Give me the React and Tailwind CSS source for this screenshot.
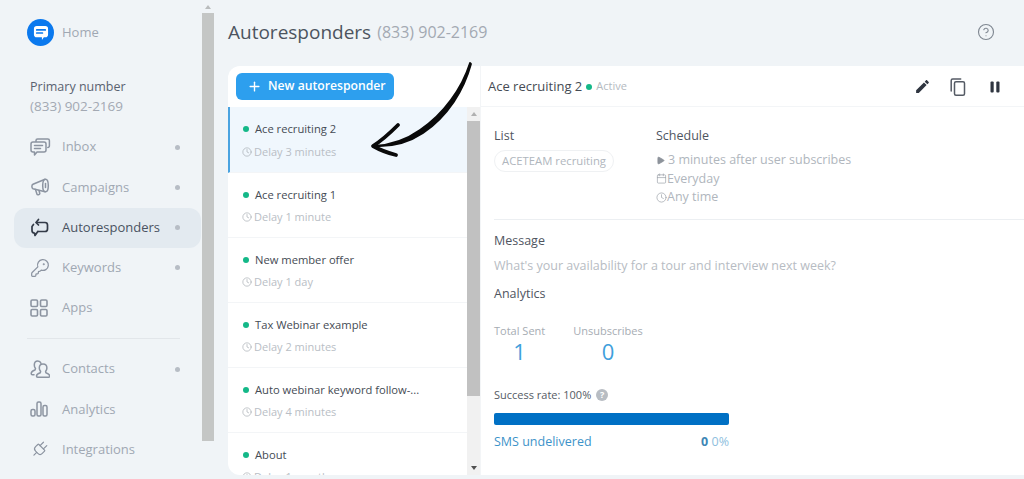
import React from "react";
import { Plus, Clock, Calendar, Play, CircleHelp, KeyRound, Plug } from "lucide-react";

const font = "font-['Open_Sans',sans-serif]";

function InboxIcon() {
  return (
    <svg width="21" height="21" viewBox="0 0 21 21" fill="none" stroke="currentColor" strokeWidth="1.5" strokeLinecap="round" strokeLinejoin="round">
      <path d="M6 4.5V3.6A1.6 1.6 0 0 1 7.6 2h10.2a1.6 1.6 0 0 1 1.6 1.6v5.2a1.6 1.6 0 0 1-1.6 1.6" />
      <path d="M3 5h11a2 2 0 0 1 2 2v6a2 2 0 0 1-2 2H7l-2.5 3v-3H3a2 2 0 0 1-2-2V7a2 2 0 0 1 2-2z" />
      <path d="M4.5 8.5h8M4.5 11.5h6" />
    </svg>
  );
}

function HornIcon() {
  return (
    <svg width="20" height="20" viewBox="0 0 20 20" fill="none" stroke="currentColor" strokeWidth="1.5" strokeLinecap="round" strokeLinejoin="round">
      <ellipse cx="15.500" cy="8.500" rx="2.800" ry="6.300" />
      <path d="M15 2.300 3 7.200c-1.500.7-1.500 3.800 0 4.500L15 14.700" />
      <path d="M5.500 12.500 7 17.200c.3 1 2.800.5 2.800-.7l-.8-3" />
      <path d="M15.500 6.500v4" />
    </svg>
  );
}

function RespondIcon() {
  return (
    <svg width="19" height="19" viewBox="0 0 19 19" fill="none" stroke="currentColor" strokeWidth="1.7" strokeLinecap="round" strokeLinejoin="round">
      <path d="M8.500 1.500 6 4.500l2.500 2.500" />
      <path d="M6.500 4.500H15a2.500 2.500 0 0 1 2.500 2.500v4a2.500 2.500 0 0 1-2.500 2.500H8" />
      <path d="M3.500 6.500 2 8.500v4A2.500 2.500 0 0 0 4.500 15l.5 2.500 2.800-4" />
    </svg>
  );
}

function AppsIcon() {
  return (
    <svg width="18" height="18" viewBox="0 0 18 18" fill="none" stroke="currentColor" strokeWidth="1.6">
      <rect x="1" y="1" width="6.500" height="6.500" rx="1.200" />
      <rect x="10.500" y="1" width="6.500" height="6.500" rx="1.200" />
      <rect x="1" y="10.500" width="6.500" height="6.500" rx="1.200" />
      <rect x="10.500" y="10.500" width="6.500" height="6.500" rx="1.200" />
    </svg>
  );
}

function ContactsIcon() {
  return (
    <svg width="20" height="19" viewBox="0 0 20 19" fill="none" stroke="currentColor" strokeWidth="1.5" strokeLinecap="round" strokeLinejoin="round">
      <path d="M11 3.200C10.500 1.800 9.300 1 7.800 1 5.800 1 4.300 2.500 4.300 5c0 1.500.5 2.700 1.200 3.500L5 10c-2 .7-3.800 1.800-3.800 3.500 0 .8.500 1.300 1.200 1.300H4" />
      <path d="M13 4c-2.200 0-3.700 1.700-3.700 4 0 1.500.5 2.600 1.300 3.400l-.3 1.400c-2 .7-3.800 1.600-3.800 3.300 0 .6.400 1.100 1.100 1.100h11c.7 0 1.100-.5 1.100-1.100 0-1.700-1.800-2.600-3.800-3.300l-.3-1.400c.8-.8 1.300-1.900 1.300-3.400C16.900 5.700 15.200 4 13 4z" />
    </svg>
  );
}

function BarsIcon() {
  return (
    <svg width="18" height="16" viewBox="0 0 18 16" fill="none" stroke="currentColor" strokeWidth="1.5">
      <rect x="1" y="8.500" width="4" height="6.500" rx="1.500" />
      <rect x="7" y="1" width="4" height="14" rx="1.500" />
      <rect x="13" y="4.500" width="4" height="10.500" rx="1.500" />
    </svg>
  );
}

function Logo() {
  return (
    <div className="flex h-[27px] w-[27px] items-center justify-center rounded-full bg-[#0b79ee]">
      <svg width="16" height="16" viewBox="0 0 17 17">
        <path d="M4 1h9a3 3 0 0 1 3 3v6a3 3 0 0 1-3 3h-1.500l-2 3v-3H4a3 3 0 0 1-3-3V4a3 3 0 0 1 3-3z" fill="#fff" />
        <path d="M4 5.200h9M4 8.500h6" stroke="#0b79ee" strokeWidth="1.800" strokeLinecap="round" />
      </svg>
    </div>
  );
}

function NavItem({ icon, label, dot, active }) {
  return (
    <div className={`flex h-[40px] items-center rounded-xl pl-[16px] pr-[21px] ${active ? "bg-[#e3eaf0]" : ""}`}>
      <div className={`flex w-[32px] items-center ${active ? "text-[#333b48]" : "text-[#8c94a1]"}`}>{icon}</div>
      <span className={`flex-1 text-[13px] font-medium ${active ? "text-[#4a5361]" : "text-[#a0a8b3]"}`}>{label}</span>
      {dot && <span className="h-[5px] w-[5px] rounded-full bg-[#b7bdc5]" />}
    </div>
  );
}

function Sidebar() {
  return (
    <aside className="flex h-full w-[202px] shrink-0 flex-col pl-[14px] pr-[1px]">
      <div className="flex items-center gap-[8px] pl-[13px] pt-[19px]">
        <Logo />
        <span className="pt-[1px] text-[13px] font-medium text-[#a0a8b3]">Home</span>
      </div>
      <div className="pl-[16px] pt-[31px]">
        <div className="text-[12.500px] leading-[20px] font-medium text-[#5a6270]">Primary number</div>
        <div className="text-[13.500px] leading-[19px] text-[#a3a9b3]">(833) 902-2169</div>
      </div>
      <nav className="mt-[11px] flex flex-col gap-[0.300px]">
        <NavItem icon={<InboxIcon />} label="Inbox" dot />
        <NavItem icon={<HornIcon />} label="Campaigns" dot />
        <NavItem icon={<RespondIcon />} label="Autoresponders" dot active />
        <NavItem icon={<KeyRound size={20} strokeWidth={1.500} />} label="Keywords" dot />
        <NavItem icon={<AppsIcon />} label="Apps" />
      </nav>
      <div className="ml-[13px] mr-[21px] my-[10px] border-t border-[#e2e6ea]" />
      <nav className="flex flex-col gap-[0.300px]">
        <NavItem icon={<ContactsIcon />} label="Contacts" dot />
        <NavItem icon={<BarsIcon />} label="Analytics" />
        <NavItem icon={<Plug size={19} strokeWidth={1.500} className="rotate-45" />} label="Integrations" />
      </nav>
    </aside>
  );
}

function PageScroll() {
  return (
    <div className="flex h-[441px] w-[12px] shrink-0 flex-col items-center">
      <div className="flex h-[13px] w-full items-center justify-center">
        <div className="h-0 w-0 border-x-[3px] border-b-[4px] border-x-transparent border-b-[#b9bcbd]" />
      </div>
      <div className="w-full flex-1 bg-[#c4c6c5]" />
    </div>
  );
}

function ListItem({ title, delay, active }) {
  return (
    <div className={`shrink-0 border-b border-[#f3f5f7] ${active ? "h-[66px] border-l-[2px] border-l-[#4aa3e0] bg-[#f0f7fd] pl-[13px] pt-[15px]" : "h-[65px] pl-[15px] pt-[15px]"}`}>
      <div className="flex items-center gap-[6px]">
        <span className="h-[6px] w-[6px] rounded-full bg-[#14b888]" />
        <span className="text-[11.200px] leading-[14px] font-medium text-[#454b54]">{title}</span>
      </div>
      <div className={`flex items-center gap-[2px] text-[#b9bec5] ${active ? "mt-[9px]" : "mt-[8px]"}`}>
        <Clock size={10} strokeWidth={1.500} className="-ml-[1px] text-[#a0a6ae]" />
        <span className="text-[11px] leading-[14px]">{delay}</span>
      </div>
    </div>
  );
}

function ListPanel() {
  return (
    <section className="flex w-[252px] shrink-0 flex-col overflow-hidden rounded-l-xl bg-white">
      <div className="h-[41px] shrink-0 pl-[8px] pt-[7px]">
        <button className="flex h-[27px] w-[158px] items-center gap-[6px] rounded-md bg-[#2d9fee] pl-[11px] text-[12.200px] font-semibold text-white">
          <Plus size={15} strokeWidth={2.200} />
          New autoresponder
        </button>
      </div>
      <div className="flex min-h-0 flex-1">
        <div className="flex w-[239px] shrink-0 flex-col overflow-hidden">
          <ListItem title="Ace recruiting 2" delay="Delay 3 minutes" active />
          <ListItem title="Ace recruiting 1" delay="Delay 1 minute" />
          <ListItem title="New member offer" delay="Delay 1 day" />
          <ListItem title="Tax Webinar example" delay="Delay 2 minutes" />
          <ListItem title="Auto webinar keyword follow-..." delay="Delay 4 minutes" />
          <ListItem title="About" delay="Delay 1 month" />
        </div>
        <div className="flex w-[13px] flex-col bg-[#f1f1f1]">
          <div className="flex h-[14px] items-center justify-center">
            <div className="h-0 w-0 border-x-[3px] border-b-[4px] border-x-transparent border-b-[#b0b0b0]" />
          </div>
          <div className="h-[275px] bg-[#c1c1c1]" />
          <div className="flex flex-1 items-end justify-center pb-[5px]">
            <div className="h-0 w-0 border-x-[3px] border-t-[4px] border-x-transparent border-t-[#505050]" />
          </div>
        </div>
      </div>
    </section>
  );
}

function DetailPanel() {
  return (
    <section className="min-w-0 flex-1 border-l border-[#f3f5f7] bg-white">
      <div className="flex h-[41px] items-center border-b border-[#f3f5f7] pl-[7px] pt-[1px]">
        <span className="text-[13px] font-medium text-[#454b54]">Ace recruiting 2</span>
        <span className="ml-[4px] h-[6px] w-[6px] rounded-full bg-[#14b888]" />
        <span className="ml-[4px] text-[11px] text-[#b4bac1]">Active</span>
        <div className="ml-auto flex items-center pr-[24px] text-[#2f3540]">
          <svg width="17" height="17" viewBox="0 0 24 24" fill="currentColor">
            <path d="M20.710 7.040c.39-.39.39-1.040 0-1.410l-2.340-2.340c-.37-.39-1.020-.39-1.410 0l-1.840 1.830 3.750 3.750M3 17.250V21h3.750L17.810 9.930l-3.750-3.750L3 17.250z" />
          </svg>
          <svg width="16" height="18" viewBox="0 0 16 18" fill="none" stroke="#555b65" strokeWidth="1.500" strokeLinecap="round" className="ml-[19px]">
            <rect x="4.500" y="3.700" width="10" height="13.500" rx="1.500" />
            <path d="M1.200 13V2.500A1.500 1.500 0 0 1 2.700 1h8" />
          </svg>
          <svg width="10" height="12" viewBox="0 0 10 12" fill="currentColor" className="ml-[24px]">
            <rect x="0.500" y="0.500" width="3.200" height="11" rx="1" />
            <rect x="6.300" y="0.500" width="3.200" height="11" rx="1" />
          </svg>
        </div>
      </div>

      <div className="pl-[13px]">
        <div className="flex border-b border-[#eceff2] pb-[12px] pt-[21px]">
          <div className="w-[162px]">
            <div className="text-[12.500px] leading-[16px] font-medium text-[#4f555f]">List</div>
            <span className="mt-[6px] inline-block rounded-full border border-[#eff1f3] px-[7px] text-[11.300px] leading-[20px] text-[#b0b6bd]">ACETEAM recruiting</span>
          </div>
          <div>
            <div className="text-[12.500px] leading-[16px] font-medium text-[#4f555f]">Schedule</div>
            <div className="mt-[7px] text-[12.500px] leading-[18.500px] text-[#b0b6bd]">
              <div className="flex items-center gap-[3px]"><Play size={9} fill="currentColor" className="text-[#8d939b]" />3 minutes after user subscribes</div>
              <div className="flex items-center"><Calendar size={11} strokeWidth={1.500} className="text-[#9aa0a8]" />Everyday</div>
              <div className="flex items-center"><Clock size={11} strokeWidth={1.500} className="text-[#9aa0a8]" />Any time</div>
            </div>
          </div>
        </div>

        <div className="pt-[13px] text-[12.500px] leading-[16px] font-medium text-[#4f555f]">Message</div>
        <div className="mt-[9px] text-[12.500px] leading-[16px] text-[#b7bcc3]">What's your availability for a tour and interview next week?</div>
        <div className="mt-[12px] text-[12.500px] leading-[16px] font-medium text-[#4f555f]">Analytics</div>

        <div className="mt-[22px] flex gap-[28px]">
          <div className="flex flex-col items-center">
            <div className="text-[11px] leading-[14px] text-[#a6acb3]">Total Sent</div>
            <div className="text-[22px] leading-[26px] text-[#3f9fdc]">1</div>
          </div>
          <div className="flex flex-col items-center">
            <div className="text-[11px] leading-[14px] text-[#a6acb3]">Unsubscribes</div>
            <div className="text-[22px] leading-[26px] text-[#3f9fdc]">0</div>
          </div>
        </div>

        <div className="mt-[24px] flex items-center gap-[5px]">
          <span className="text-[11px] leading-[14px] font-medium text-[#555b64]">Success rate: 100%</span>
          <span className="flex h-[12px] w-[12px] items-center justify-center rounded-full bg-[#b8bdc3] text-[9px] font-bold leading-none text-white">?</span>
        </div>
        <div className="mt-[11px] h-[12px] w-[235px] rounded-[2px] bg-[#0070c4]" />
        <div className="mt-[8px] flex w-[235px] items-center justify-between text-[12.500px] leading-[18px]">
          <span className="text-[#3d93c9]">SMS undelivered</span>
          <span className="text-[#8fc0de]"><b className="font-bold text-[#3d86b5]">0</b> 0%</span>
        </div>
      </div>
    </section>
  );
}

function Arrow() {
  return (
    <svg className="pointer-events-none absolute left-[360px] top-[55px]" width="120" height="110" viewBox="360 55 120 110" fill="none">
      <path d="M470 63C462 88 444 114 420 130 406 140 392 145 374 146 392 147 408 143 423 133 448 116 464 90 471 64Z" fill="#0a0a0a" stroke="#0a0a0a" strokeWidth="1.800" strokeLinejoin="round" />
      <path d="M398 125C390 133 381 141 373 146 380 150 388 153 396 155" stroke="#0a0a0a" strokeWidth="3.800" strokeLinecap="round" strokeLinejoin="round" />
    </svg>
  );
}

export default function App() {
  return (
    <div className={`relative flex h-[479px] w-[1024px] overflow-hidden bg-[#f0f4f7] ${font}`}>
      <Sidebar />
      <PageScroll />
      <main className="flex min-w-0 flex-1 flex-col">
        <header className="flex h-[66px] shrink-0 items-center pb-[2px] pl-[14px] pr-[29px]">
          <h1 className="text-[19px] font-medium text-[#4c5460]">Autoresponders</h1>
          <span className="ml-[6px] text-[16px] text-[#a3a9b2]">(833) 902-2169</span>
          <CircleHelp size={18} strokeWidth={1.500} className="ml-auto text-[#7f8791]" />
        </header>
        <div className="flex h-[409px] pl-[14px]">
          <ListPanel />
          <DetailPanel />
        </div>
      </main>
      <Arrow />
    </div>
  );
}
